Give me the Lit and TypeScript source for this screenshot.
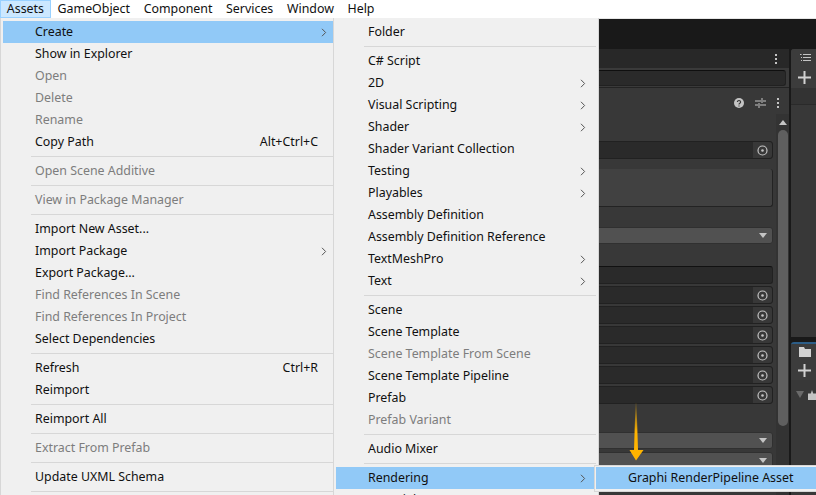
import { LitElement, html, css, nothing, svg } from "lit";
import { customElement } from "lit/decorators.js";

type Row = { t?: string; dim?: boolean; sub?: boolean; key?: string; on?: boolean; sep?: boolean };

const SEP: Row = { sep: true };

const ASSETS: Row[] = [
  { t: "Create", sub: true, on: true },
  { t: "Show in Explorer" },
  { t: "Open", dim: true },
  { t: "Delete", dim: true },
  { t: "Rename", dim: true },
  { t: "Copy Path", key: "Alt+Ctrl+C" },
  SEP,
  { t: "Open Scene Additive", dim: true },
  SEP,
  { t: "View in Package Manager", dim: true },
  SEP,
  { t: "Import New Asset..." },
  { t: "Import Package", sub: true },
  { t: "Export Package..." },
  { t: "Find References In Scene", dim: true },
  { t: "Find References In Project", dim: true },
  { t: "Select Dependencies" },
  SEP,
  { t: "Refresh", key: "Ctrl+R" },
  { t: "Reimport" },
  SEP,
  { t: "Reimport All" },
  SEP,
  { t: "Extract From Prefab", dim: true },
  SEP,
  { t: "Update UXML Schema" },
  SEP,
];

const CREATE: Row[] = [
  { t: "Folder" },
  SEP,
  { t: "C# Script" },
  { t: "2D", sub: true },
  { t: "Visual Scripting", sub: true },
  { t: "Shader", sub: true },
  { t: "Shader Variant Collection" },
  { t: "Testing", sub: true },
  { t: "Playables", sub: true },
  { t: "Assembly Definition" },
  { t: "Assembly Definition Reference" },
  { t: "TextMeshPro", sub: true },
  { t: "Text", sub: true },
  SEP,
  { t: "Scene" },
  { t: "Scene Template" },
  { t: "Scene Template From Scene", dim: true },
  { t: "Scene Template Pipeline" },
  { t: "Prefab" },
  { t: "Prefab Variant", dim: true },
  SEP,
  { t: "Audio Mixer" },
  SEP,
  { t: "Rendering", sub: true, on: true },
  { t: "Material" },
];

const picker = svg`<svg width="13" height="13" viewBox="0 0 13 13"><circle cx="6.5" cy="6.5" r="4.5" fill="none" stroke="#c4c4c4" stroke-width="1.2"/><circle cx="6.5" cy="6.5" r="1.3" fill="#c4c4c4"/></svg>`;
const plus = svg`<svg class="plus" width="13" height="13" viewBox="0 0 13 13"><path d="M6.5 0v13M0 6.5h13" fill="none" stroke="#d2d2d2" stroke-width="2"/></svg>`;

@customElement("app-root")
export class AppRoot extends LitElement {
  static styles = css`
    :host {
      display: block;
      position: relative;
      width: 816px;
      height: 495px;
      overflow: hidden;
      background: #191919;
      font-family: "Noto Sans", "Liberation Sans", sans-serif;
      font-size: 12.4px;
      color: #101010;
    }
    .menubar {
      display: flex;
      height: 18px;
      background: #fff;
      border-bottom: 1px solid #e6e6e6;
      line-height: 17px;
    }
    .menubar span {
      padding: 0 6.8px;
      box-sizing: border-box;
      height: 18px;
    }
    .menubar span.active {
      background: #cce8ff;
      box-shadow: inset 0 0 0 1px #99d1ff;
    }

    /* editor behind the menus */
    .editor {
      display: flex;
      gap: 2px;
      height: 476px;
      padding-top: 30px;
      box-sizing: border-box;
    }
    .inspector {
      flex: 1;
      display: flex;
      flex-direction: column;
      background: #383838;
      border-radius: 0 3px 0 0;
    }
    .tabbar {
      height: 19px;
      flex: none;
      background: #282828;
      display: flex;
      justify-content: flex-end;
      align-items: center;
      padding-right: 12px;
    }
    .search {
      height: 20px;
      flex: none;
      box-sizing: border-box;
      padding: 2px 3px 0 0;
      background: #3a3a3a;
      border-bottom: 1px solid #232323;
    }
    .search i {
      display: block;
      height: 14px;
      background: #2a2a2a;
      border: 1px solid #212121;
      border-top-color: #0f0f0f;
      border-radius: 3px;
    }
    .head {
      height: 26px;
      flex: none;
      box-sizing: border-box;
      padding: 4px 10px 0 0;
      display: flex;
      align-items: center;
      justify-content: flex-end;
      gap: 11px;
    }
    .dots {
      display: flex;
      flex-direction: column;
      gap: 2px;
    }
    .dots b {
      width: 2px;
      height: 2px;
      background: #c4c4c4;
    }
    .body {
      flex: 1;
      display: flex;
      min-height: 0;
    }
    .content {
      flex: 1;
      display: flex;
      flex-direction: column;
      padding: 27px 3px 0 0;
    }
    .field {
      height: 16px;
      flex: none;
      background: #2a2a2a;
      border: 1px solid #212121;
      border-radius: 3px;
      display: flex;
      justify-content: flex-end;
      margin-bottom: 2px;
    }
    .field span {
      width: 19px;
      background: #383838;
      display: flex;
      align-items: center;
      justify-content: center;
      border-radius: 0 3px 3px 0;
    }
    .box {
      height: 37px;
      flex: none;
      background: #414141;
      border: 1px solid #232323;
      border-top: none;
      border-radius: 3px;
      margin-top: 8px;
    }
    .drop {
      height: 15px;
      flex: none;
      background: #515151;
      border: 1px solid #303030;
      border-radius: 3px;
      display: flex;
      align-items: center;
      justify-content: flex-end;
      padding-right: 5px;
    }
    .drop::after {
      content: "";
      border: 4px solid transparent;
      border-top: 5px solid #c4c4c4;
      border-bottom: none;
    }
    .drop.top {
      margin-top: 20px;
    }
    .drop.low {
      margin-top: 26px;
    }
    .drop.next {
      margin-top: 3px;
    }
    .plain {
      height: 16px;
      flex: none;
      background: #2a2a2a;
      border: 1px solid #212121;
      border-top-color: #111;
      border-radius: 3px;
      margin: 22px 0 2px;
    }
    .scroll {
      width: 13px;
      flex: none;
      display: flex;
      flex-direction: column;
      align-items: center;
      background: #333;
    }
    .scroll::before {
      content: "";
      margin-top: 6px;
      border: 4px solid transparent;
      border-bottom: 5px solid #c4c4c4;
      border-top: none;
    }
    .scroll i {
      display: block;
      width: 10px;
      height: 296px;
      margin-top: 5px;
      background: #5f5f5f;
      border-radius: 5px;
    }
    .side {
      width: 25px;
      flex: none;
      display: flex;
      flex-direction: column;
    }
    .panel {
      background: #383838;
      border-radius: 3px 0 0 0;
      overflow: hidden;
    }
    .panel.a {
      height: 288px;
      flex: none;
    }
    .tool {
      background: #3c3c3c;
      box-sizing: border-box;
      padding-left: 7px;
    }
    .a .tool {
      height: 39px;
      padding-top: 4px;
    }
    .strip {
      height: 16px;
      background: #333;
      border-bottom: 1px solid #2a2a2a;
    }
    .panel.b {
      flex: 1;
      margin-top: 5px;
      border-top: 2px solid #2c5d87;
    }
    .b .tool {
      height: 36px;
      padding-top: 3px;
    }
    .tree {
      height: 80px;
      padding: 7px 0 0 5px;
    }
    .plus {
      display: block;
      margin-top: 7px;
    }
    .a .plus {
      margin-top: 8px;
    }
    .bluebar {
      height: 3px;
      background: #2c5d87;
    }
    .arrow {
      position: absolute;
      left: 628px;
      top: 402px;
    }

    /* menus, over the editor */
    .menu {
      position: absolute;
      top: 18px;
      height: 482px;
      background: #f0f0f0;
      box-sizing: border-box;
      padding: 3px 2px 0;
      border: 1px solid #d7d7d7;
      border-top: none;
    }
    .menu.assets {
      left: 0;
      width: 336px;
    }
    .menu.create {
      left: 333px;
      width: 266px;
    }
    .row {
      height: 22px;
      line-height: 22px;
      display: flex;
      align-items: center;
      padding-left: 32px;
      position: relative;
      white-space: nowrap;
    }
    .row.dim {
      color: #7d7d7d;
    }
    .row.on {
      background: #91c9f7;
    }
    .key {
      margin-left: auto;
      padding-right: 15px;
    }
    .row svg {
      position: absolute;
      right: 6px;
      top: 7px;
    }
    .create .row svg {
      right: 10px;
    }
    .sep {
      height: 1px;
      background: #d7d7d7;
      margin: 3px 0 3px 28px;
    }
    .fly {
      position: absolute;
      left: 594px;
      top: 465px;
      width: 230px;
      height: 27px;
      box-sizing: border-box;
      background: #f0f0f0;
      border: 1px solid #d7d7d7;
      padding: 1px;
    }
    .fly div {
      background: #91c9f7;
      height: 22px;
      line-height: 22px;
      padding-left: 32px;
    }
  `;

  private renderRow(r: Row) {
    if (r.sep) return html`<div class="sep"></div>`;
    return html`<div class="row ${r.dim ? "dim" : ""} ${r.on ? "on" : ""}">
      ${r.t}
      ${r.key ? html`<span class="key">${r.key}</span>` : nothing}
      ${r.sub
        ? html`<svg width="6" height="9" viewBox="0 0 6 9"><path d="M1 .8 4.6 4.5 1 8.2" fill="none" stroke="#555" stroke-width="1"/></svg>`
        : nothing}
    </div>`;
  }

  private field() {
    return html`<div class="field"><span>${picker}</span></div>`;
  }

  render() {
    return html`
      <div class="menubar">
        <span class="active">Assets</span>
        <span>GameObject</span>
        <span>Component</span>
        <span>Services</span>
        <span>Window</span>
        <span>Help</span>
      </div>
      <div class="editor">
        <div class="inspector">
          <div class="tabbar"><div class="dots"><b></b><b></b><b></b></div></div>
          <div class="search"><i></i></div>
          <div class="head">
            <svg width="10" height="10" viewBox="0 0 10 10"><circle cx="5" cy="5" r="5" fill="#c4c4c4"/><path d="M3.4 4a1.6 1.5 0 1 1 2.4 1.3c-.6.4-.8.6-.8 1.2M5 7.4v1" fill="none" stroke="#383838" stroke-width="1.2"/></svg>
            <svg width="11" height="10" viewBox="0 0 11 10"><path d="M0 3h6M8 3h3M0 7h3M5 7h6M7 0v5M4 5v5" fill="none" stroke="#c4c4c4"/></svg>
            <div class="dots"><b></b><b></b><b></b></div>
          </div>
          <div class="body">
            <div class="content">
              ${this.field()}
              <div class="box"></div>
              <div class="drop top"></div>
              <div class="plain"></div>
              ${[0, 1, 2, 3, 4, 5].map(() => this.field())}
              <div class="drop low"></div>
              <div class="drop next"></div>
            </div>
            <div class="scroll"><i></i></div>
          </div>
        </div>
        <div class="side">
          <div class="panel a">
            <div class="tool">
              <svg style="display:block;margin-left:2px" width="11" height="10" viewBox="0 0 11 10"><path d="M3 1.5h8M3 4.5h8M3 7.5h8M0 1.5h1.6M1 4.5h1M1 7.5h1" fill="none" stroke="#c4c4c4"/></svg>
              ${plus}
            </div>
            <div class="strip"></div>
          </div>
          <div class="panel b">
            <div class="tool">
              <svg style="display:block;margin-left:1px" width="12" height="10" viewBox="0 0 12 10"><path d="M0 0h5l1 2h6v8H0z" fill="#d2d2d2"/></svg>
              ${plus}
            </div>
            <div class="tree">
              <svg width="20" height="10" viewBox="0 0 20 10"><path d="M0 1h8L4 8z" fill="#6a6a6a"/><path d="m16 0 1.2 3.400H20v6.600h-8V3.400h2.800z" fill="#c4c4c4"/></svg>
            </div>
            <div class="bluebar"></div>
          </div>
        </div>
      </div>

      <svg class="arrow" width="16" height="60" viewBox="0 0 16 60">
        <defs>
          <linearGradient id="fade" x1="0" y1="0" x2="0" y2="1">
            <stop offset="0" stop-color="#ffb400" stop-opacity="0.1" />
            <stop offset="0.5" stop-color="#ffb400" />
          </linearGradient>
        </defs>
        <path d="M7.500 1h1l1.500 47h5.500L8 58.500 1.500 48H6z" fill="url(#fade)" />
      </svg>

      <div class="menu assets">${ASSETS.map((r) => this.renderRow(r))}</div>
      <div class="menu create">${CREATE.map((r) => this.renderRow(r))}</div>
      <div class="fly"><div>Graphi RenderPipeline Asset</div></div>
    `;
  }
}
